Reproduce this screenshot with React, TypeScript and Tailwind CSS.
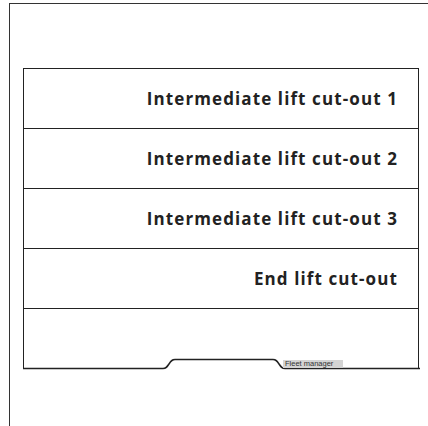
import React from "react";

const rows = [
  "Intermediate lift cut-out 1",
  "Intermediate lift cut-out 2",
  "Intermediate lift cut-out 3",
  "End lift cut-out",
];

export default function App() {
  return (
    <div className="w-[428px] h-[426px] overflow-hidden bg-white pt-[3px] pl-[9px]" style={{ fontFamily: "'Open Sans', 'Liberation Sans', sans-serif" }}>
      <div className="h-[500px] border-t-[1.5px] border-l-[1.5px] border-[#333] pl-[13px] pt-[64px]">
        <div className="w-[396px] border-t-[1.5px] border-l-[1.5px] border-r-[1.5px] border-[#222]">
          {rows.map((r) => (
            <div key={r} className="h-[60px] border-b-[1.5px] border-[#222] flex items-center justify-end pr-[20px]">
              <span className="text-[17px] font-bold tracking-[1.1px] text-[#222] leading-none">{r}</span>
            </div>
          ))}
          <div className="relative h-[60px]">
            <svg className="absolute left-[-1.5px] bottom-[-1px]" width="397" height="14" viewBox="0 0 397 14">
              <path d="M0 12.5 H140 C143 12.5 144 11 146 8 C148 5 149 3.5 152 3.5 H250 C253 3.5 254 5 256 8 C258 11 259 12.5 262 12.5 H397" fill="none" stroke="#222" strokeWidth="1.5" />
            </svg>
            <div className="absolute left-[259px] bottom-[1px] h-[8px] w-[60px] bg-[#d4d4d4] flex items-center pl-[2px]">
              <span className="text-[7.5px] leading-none text-[#333]" style={{ fontFamily: "'Liberation Sans', sans-serif" }}>Fleet manager</span>
            </div>
          </div>
        </div>
      </div>
    </div>
  );
}
